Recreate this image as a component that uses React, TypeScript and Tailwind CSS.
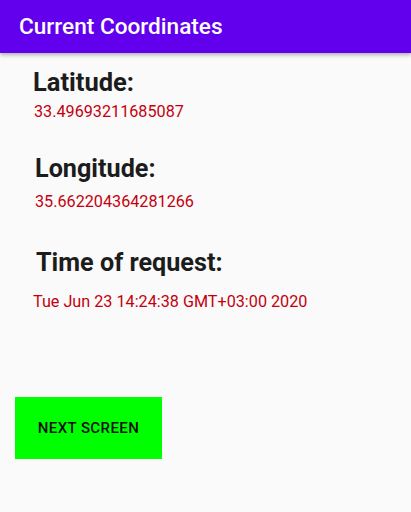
const font = { fontFamily: "Roboto, 'Noto Sans', sans-serif" };

function Field({ label, value, labelPad, valuePad, gap, size }: { label: string; value: string; labelPad: string; valuePad: string; gap: string; size: string }) {
  return (
    <div className="flex flex-col">
      <div className={`font-bold leading-[28px] text-[#1c1c1c] ${size} ${labelPad}`}>{label}</div>
      <div className={`text-[16.2px] leading-[18px] text-[#c4000f] ${gap} ${valuePad}`}>{value}</div>
    </div>
  );
}

export default function App() {
  return (
    <div className="flex h-[512px] w-[411px] flex-col bg-[#fafafa]" style={font}>
      <div className="z-10 flex h-[53px] shrink-0 items-center bg-[#6200ee] px-[19px] shadow-[0_2px_4px_rgba(0,0,0,0.3)]">
        <span className="text-[22.6px] font-medium text-white">Current Coordinates</span>
      </div>
      <div className="flex flex-col pt-[15px]">
        <Field label="Latitude:" value="33.49693211685087" labelPad="pl-[33px]" valuePad="pl-[34px]" gap="mt-[7px]" size="text-[25.5px]" />
        <div className="h-[34px]" />
        <Field label="Longitude:" value="35.662204364281266" labelPad="pl-[35px]" valuePad="pl-[35px]" gap="mt-[10px]" size="text-[25.2px]" />
        <div className="h-[38px]" />
        <Field label="Time of request:" value="Tue Jun 23 14:24:38 GMT+03:00 2020" labelPad="pl-[36px]" valuePad="pl-[33px]" gap="mt-[16px]" size="text-[25.2px]" />
      </div>
      <div className="mt-[86px] pl-[15px]">
        <button className="flex h-[62px] w-[147px] items-center justify-center bg-[#00ff00] text-[15px] font-medium tracking-[0.4px] text-[#111]">
          NEXT SCREEN
        </button>
      </div>
    </div>
  );
}
